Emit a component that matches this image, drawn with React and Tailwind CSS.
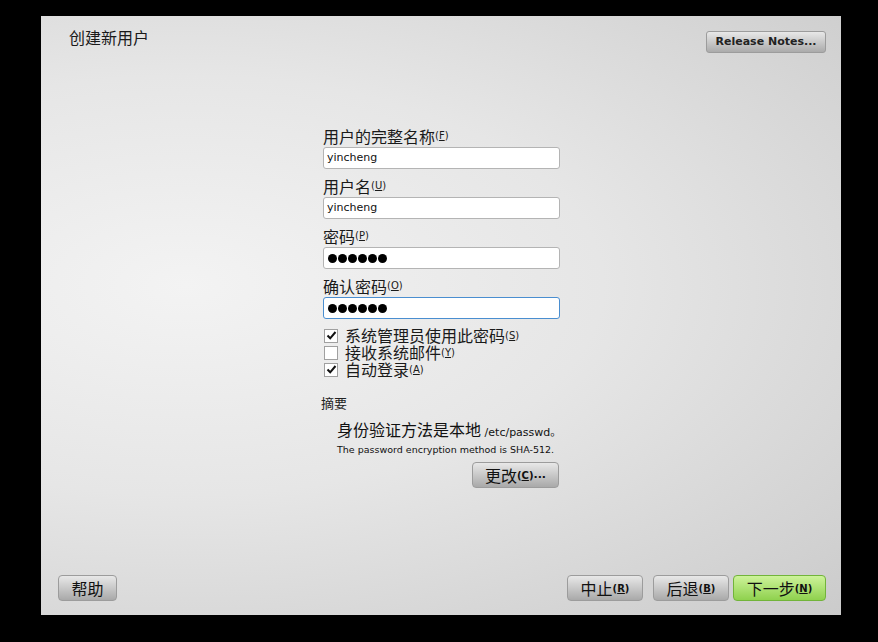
import { memo } from 'react';

const cjk = "font-['Noto_Sans_CJK_SC','DejaVu_Sans',sans-serif]";
const latin = "font-['DejaVu_Sans','Noto_Sans_CJK_SC',sans-serif]";

function Key({ k, bold }) {
  return (
    <span className={`${latin} text-[10px] ${bold ? 'font-bold' : ''}`}>
      (<span className="underline">{k}</span>)
    </span>
  );
}

function Field({ label, k, children }) {
  return (
    <div>
      <div className={`h-[28px] flex items-end pb-[1px] text-[16px] leading-[20px] text-[#1a1a1a] ${cjk}`}>
        {label}
        <Key k={k} />
      </div>
      {children}
    </div>
  );
}

function TextBox({ value, focused }) {
  return (
    <div
      className={`h-[22px] w-[237px] rounded-[3px] bg-white flex items-center px-[3px] ${
        focused ? 'border border-[#4a8ed0]' : 'border border-[#b4b4b4]'
      }`}
    >
      {value}
    </div>
  );
}

function Dots() {
  return (
    <div className="flex gap-[1px] pl-[1px]">
      {[0, 1, 2, 3, 4, 5].map((i) => (
        <span key={i} className="w-[9px] h-[9px] rounded-full bg-black" />
      ))}
    </div>
  );
}

function Check({ checked, label, k }) {
  return (
    <div className={`h-[17px] flex items-center leading-[17px] text-[#1a1a1a] ${cjk}`}>
      <span className="w-[14px] h-[14px] ml-[1px] mr-[7px] bg-white border border-[#a0a0a0] flex items-center justify-center">
        {checked && (
          <svg width="11" height="11" viewBox="0 0 11 11">
            <path d="M1.5 5.5 L4.2 8.3 L9.5 2" stroke="#111" strokeWidth="2" fill="none" />
          </svg>
        )}
      </span>
      <span className="text-[16px] leading-[17px]">{label}</span>
      <Key k={k} />
    </div>
  );
}

function Btn({ children, w, green }) {
  return (
    <button
      className={`h-[26px] ${w} rounded-[4px] flex items-center justify-center text-[16px] text-[#111] ${cjk} ${
        green
          ? 'border border-[#72b43a] bg-[linear-gradient(#cdf39a,#8fd14e)]'
          : 'border border-[#9c9c9c] bg-[linear-gradient(#e8e8e8,#a9a9a9)]'
      }`}
    >
      {children}
    </button>
  );
}

const App = memo(function App() {
  return (
    <div className="w-full h-[642px] bg-black pt-[16px] pl-[41px]">
      <div className="w-[800px] h-[599px] flex flex-col bg-[radial-gradient(ellipse_at_18%_45%,#f3f3f3,#e6e6e6_45%,#cbcbcb_100%)]">
        {/* header */}
        <div className="flex justify-between items-start pl-[28px] pr-[15px] pt-[11px]">
          <div className={`text-[16px] leading-[20px] text-[#1a1a1a] ${cjk}`}>创建新用户</div>
          <button className={`mt-[4px] h-[22px] w-[120px] rounded-[3px] border border-[#9c9c9c] bg-[linear-gradient(#e8e8e8,#ababab)] text-[11px] font-bold text-[#222] ${latin}`}>
            Release Notes...
          </button>
        </div>

        {/* form */}
        <div className="ml-[282px] w-[237px] mt-[66px]">
          <Field label="用户的完整名称" k="F">
            <TextBox value={<span className={`${latin} text-[11px] text-[#111]`}>yincheng</span>} />
          </Field>
          <Field label="用户名" k="U">
            <TextBox value={<span className={`${latin} text-[11px] text-[#111]`}>yincheng</span>} />
          </Field>
          <Field label="密码" k="P">
            <TextBox value={<Dots />} />
          </Field>
          <Field label="确认密码" k="O">
            <TextBox value={<Dots />} focused />
          </Field>

          <div className="mt-[8px]">
            <Check checked label="系统管理员使用此密码" k="S" />
            <Check label="接收系统邮件" k="Y" />
            <Check checked label="自动登录" k="A" />
          </div>

          <div className={`mt-[17px] -ml-[2px] text-[13px] leading-[16px] text-[#222] ${cjk}`}>摘要</div>
          <div className="pl-[14px] mt-[8px] whitespace-nowrap">
            <div className={`text-[16px] leading-[20px] text-[#111] ${cjk}`}>
              身份验证方法是本地 <span className={`${latin} text-[11px]`}>/etc/passwd。</span>
            </div>
            <div className={`mt-[1px] text-[9.5px] leading-[12px] text-[#111] ${latin}`}>
              The password encryption method is SHA-512.
            </div>
          </div>
          <div className="flex justify-end mt-[6px] pr-[1px]">
            <Btn w="w-[87px]">
              更改<Key k="C" bold /><span className={`${latin} text-[11px] font-bold`}>...</span>
            </Btn>
          </div>
        </div>

        <div className="flex-1" />

        {/* footer */}
        <div className="flex items-center pl-[17px] pr-[15px] pb-[14px]">
          <Btn w="w-[59px]">帮助</Btn>
          <div className="flex-1" />
          <Btn w="w-[76px]">
            中止<Key k="R" bold />
          </Btn>
          <div className="w-[10px]" />
          <Btn w="w-[76px]">
            后退<Key k="B" bold />
          </Btn>
          <div className="w-[4px]" />
          <Btn w="w-[93px]" green>
            下一步<Key k="N" bold />
          </Btn>
        </div>
      </div>
    </div>
  );
});

export default App;
